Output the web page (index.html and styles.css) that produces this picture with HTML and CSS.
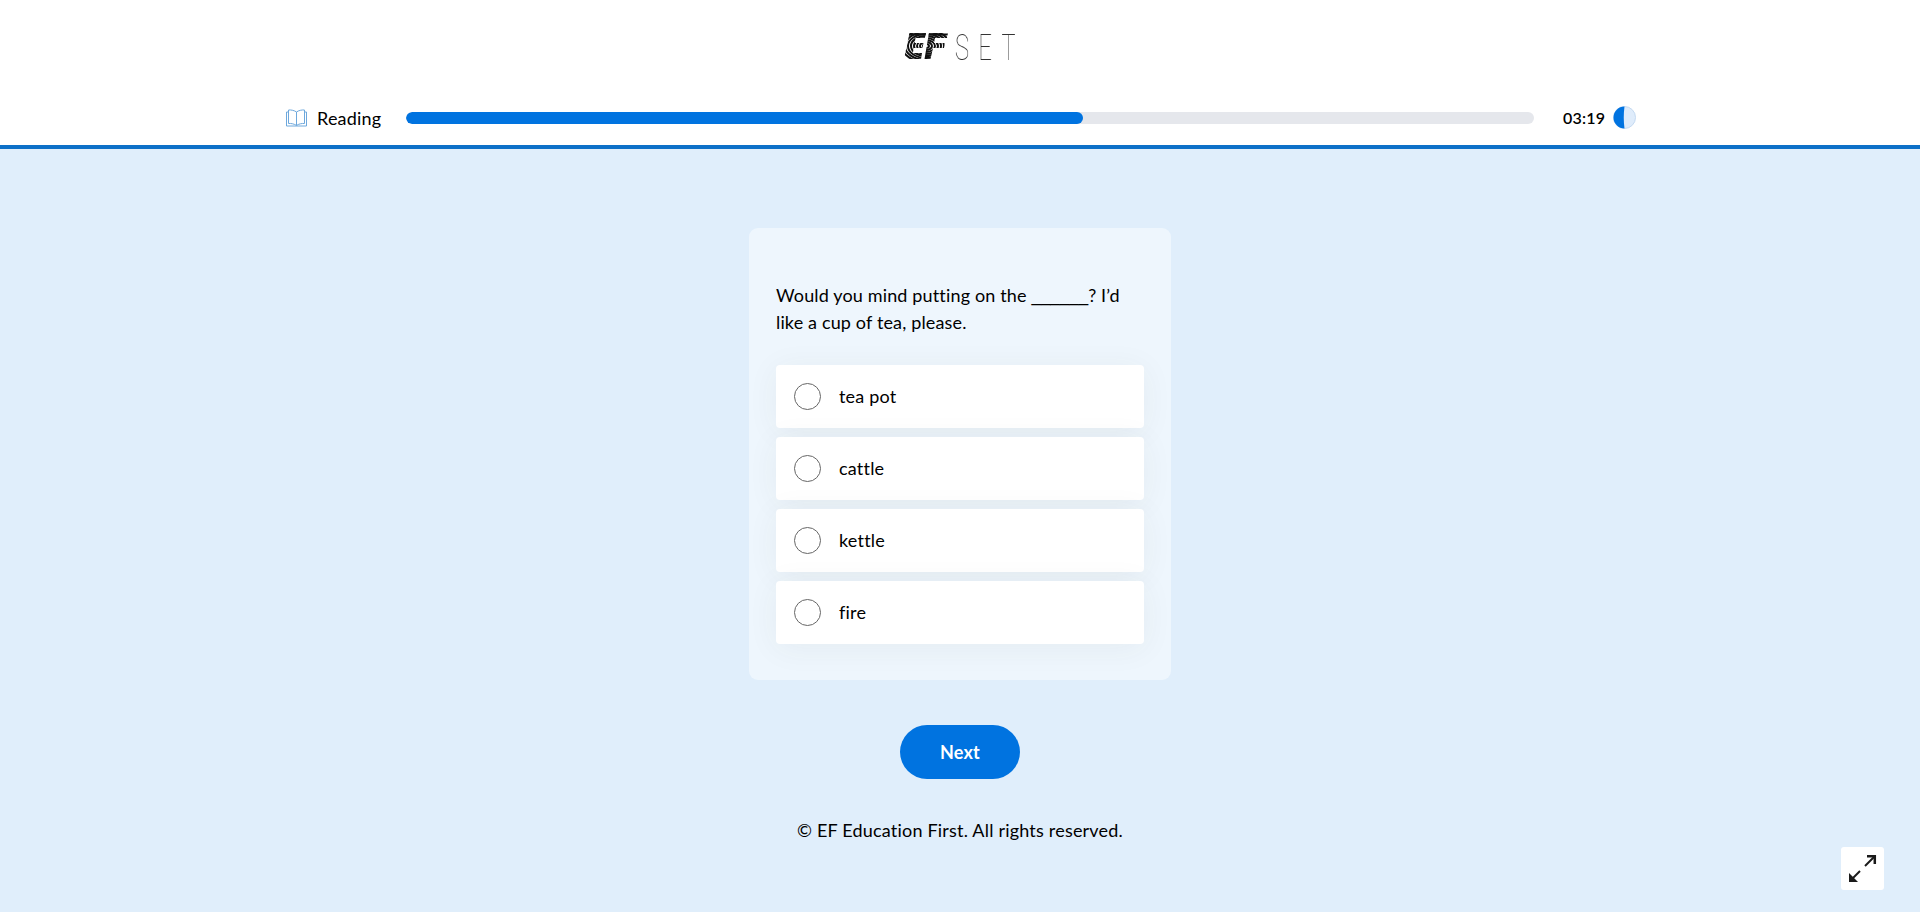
FILE: index.html
```html
<!DOCTYPE html>
<html lang="en">
<head>
    <meta charset="UTF-8">
    <meta name="viewport" content="width=device-width, initial-scale=1.0">
    <title>EF SET Reading</title>
    <link rel="stylesheet" href="styles.css">
</head>
<body>
    <header class="header">
        <div class="logo">
            <svg class="logo-ef" width="44" height="26" viewBox="0 0 44 26">
                <defs>
                    <clipPath id="efShape">
                        <path d="M5.500 0H22L20.800 5H11.500L10.700 10H19.500L18.500 15H9.700L8.900 20H18L17 26H0Z"/>
                        <path d="M25 0H44L43 5H31L30 10H41L40 15H29L26.500 26H20.500Z"/>
                    </clipPath>
                </defs>
                <g clip-path="url(#efShape)" fill="none" stroke="#111" stroke-width="2">
                    <ellipse cx="22" cy="13" rx="3" ry="2"/>
                    <ellipse cx="22" cy="13" rx="6" ry="4"/>
                    <ellipse cx="22" cy="13" rx="9" ry="6"/>
                    <ellipse cx="22" cy="13" rx="12" ry="8"/>
                    <ellipse cx="22" cy="13" rx="15" ry="10"/>
                    <ellipse cx="22" cy="13" rx="18" ry="12"/>
                    <ellipse cx="22" cy="13" rx="21" ry="14"/>
                    <ellipse cx="22" cy="13" rx="24" ry="16"/>
                    <path d="M0 1.500H44" stroke-width="2"/>
                </g>
            </svg>
            <span class="logo-set">SET</span>
        </div>
        <div class="status">
            <div class="section">
                <svg width="21" height="18" viewBox="0 0 21 18" fill="none" stroke="#6ea8dc" stroke-width="1">
                    <path d="M10.500 3C8.500 1.500 5 0.700 2.500 1V14.500C5 14.200 8.500 15 10.500 16.500C12.500 15 16 14.200 18.500 14.500V1C16 0.700 12.500 1.500 10.500 3Z"/>
                    <path d="M10.500 3V16.500"/>
                    <path d="M0.500 3V17H20.500V3H18.500M0.500 3H2.500"/>
                </svg>
                <span>Reading</span>
            </div>
            <div class="progress">
                <div class="progress-fill" style="width: 60%"></div>
            </div>
            <div class="timer">
                <span>03:19</span>
                <svg width="23" height="23" viewBox="0 0 23 23">
                    <circle cx="11.500" cy="11.500" r="11" fill="#dfecfb" stroke="#c5daf1" stroke-width="1"/>
                    <path d="M11.500 0.500A11 11 0 0 0 11.500 22.500C10.500 15 10.500 8 11.500 0.500Z" fill="#0073e0"/>
                </svg>
            </div>
        </div>
    </header>

    <main class="main">
        <section class="card">
            <p class="question">Would you mind putting on the <span class="blank">______</span>? I’d like a cup of tea, please.</p>
            <div class="options">
                <label class="option"><span class="radio"></span><span class="option-text">tea pot</span></label>
                <label class="option"><span class="radio"></span><span class="option-text">cattle</span></label>
                <label class="option"><span class="radio"></span><span class="option-text">kettle</span></label>
                <label class="option"><span class="radio"></span><span class="option-text">fire</span></label>
            </div>
        </section>
        <button class="next" type="button">Next</button>
        <p class="copyright">© EF Education First. All rights reserved.</p>
    </main>

    <button class="fullscreen" type="button" aria-label="Fullscreen">
        <svg width="43" height="43" viewBox="0 0 43 43" fill="none" stroke="#1a1a1a" stroke-width="2">
            <path d="M24 19L33 10"/>
            <path d="M26 9.200H33.800V17" stroke-width="2.500"/>
            <path d="M19 24L11 32"/>
            <path d="M8 26V35H17Z" fill="#1a1a1a" stroke="none"/>
        </svg>
    </button>
</body>
</html>
```
FILE: styles.css
```css
* {
    box-sizing: border-box;
}
html, body {
    height: 100%;
}
body {
    margin: 0;
    font-family: Lato, "Open Sans", sans-serif;
    letter-spacing: 0.2px;
    color: #000;
    background-color: #e0eefb;
    display: flex;
    flex-direction: column;
    overflow: hidden;
}
.header {
    height: 149px;
    flex: none;
    background-color: #fff;
    border-bottom: 4px solid #0d70c8;
}
.logo {
    height: 106px;
    padding-top: 33px;
    display: flex;
    justify-content: center;
    align-items: flex-start;
    gap: 7px;
}
.logo-set {
    width: 62px;
    margin-top: 2px;
    font-family: Roboto, sans-serif;
    font-size: 36px;
    font-weight: 100;
    line-height: 26px;
    letter-spacing: 14px;
    color: #333;
    transform: scaleX(0.66);
    transform-origin: left center;
    will-change: transform;
}
.status {
    width: 1352px;
    margin: 0 auto;
    display: flex;
    align-items: center;
    font-size: 18px;
}
.section {
    display: flex;
    align-items: center;
    gap: 10px;
    width: 122px;
    padding-left: 2px;
    flex: none;
}
.progress {
    width: 1128px;
    height: 12px;
    flex: none;
    background-color: #e5e7ec;
    border-radius: 6px;
    overflow: hidden;
}
.progress-fill {
    height: 100%;
    background-color: #0073e0;
    border-radius: 6px;
}
.timer {
    display: flex;
    align-items: center;
    gap: 8px;
    margin-left: 29px;
    font-size: 16px;
    font-weight: 600;
}
.main {
    flex: 1;
    display: flex;
    flex-direction: column;
    align-items: center;
    padding-top: 79px;
}
.card {
    width: 422px;
    height: 452px;
    padding: 54px 27px 0;
    background-color: #eef6fd;
    border-radius: 9px;
}
.question {
    margin: 0 0 29px;
    font-size: 18px;
    line-height: 27px;
    letter-spacing: 0.15px;
}
.blank {
    display: inline-block;
    font-family: "Liberation Sans", sans-serif;
    font-size: 17px;
    line-height: 1;
    letter-spacing: 0;
}
.options {
    display: flex;
    flex-direction: column;
    gap: 9px;
}
.option {
    height: 63px;
    display: flex;
    align-items: center;
    gap: 18px;
    padding-left: 18px;
    font-size: 18px;
    background-color: #fff;
    border-radius: 4px;
    box-shadow: 0 4px 32px rgba(70, 70, 50, 0.06);
}
.option-text {
    padding-bottom: 2px;
}
.radio {
    width: 27px;
    height: 27px;
    border: 1px solid #666;
    border-radius: 50%;
}
.next {
    width: 120px;
    height: 54px;
    margin-top: 45px;
    border: none;
    border-radius: 27px;
    background-color: #0073e0;
    color: #fff;
    font-family: inherit;
    font-size: 18px;
    font-weight: 700;
    letter-spacing: 0.2px;
}
.copyright {
    margin: 38px 0 0;
    font-size: 18px;
    line-height: 27px;
}
.fullscreen {
    position: absolute;
    left: 1841px;
    top: 847px;
    width: 43px;
    height: 43px;
    padding: 0;
    border: none;
    border-radius: 3px;
    background-color: #fff;
}
.fullscreen svg {
    display: block;
}
```
